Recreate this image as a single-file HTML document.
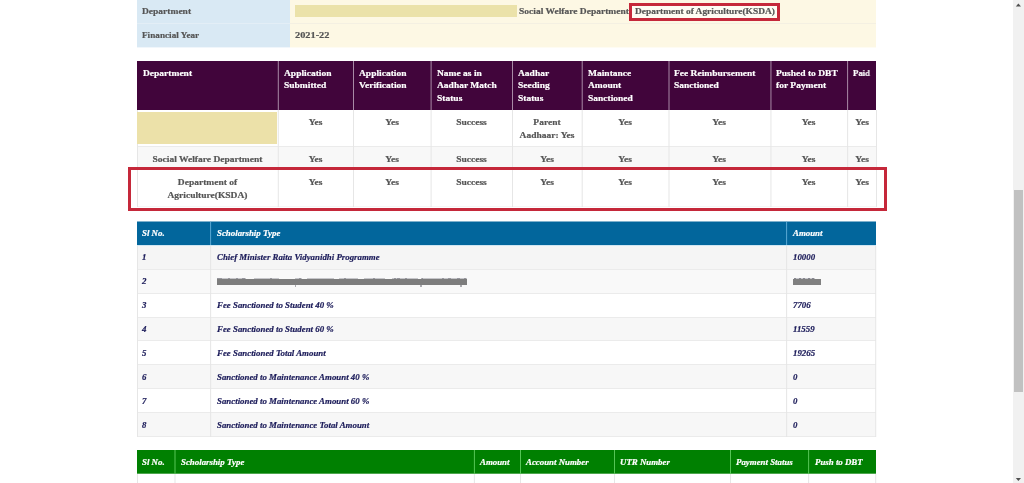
<!DOCTYPE html>
<html><head><meta charset="utf-8">
<style>
html,body{margin:0;padding:0;}
body{width:1024px;height:483px;overflow:hidden;background:#fff;position:relative;font-family:"Liberation Serif",serif;}
.a{position:absolute;box-sizing:border-box;}
.t{position:absolute;white-space:nowrap;font-weight:bold;font-size:8.9px;line-height:12.4px;color:#555;transform:scaleX(1.07);transform-origin:0 0;will-change:transform;-webkit-text-stroke:0.2px;}
.h{color:#fff;}
.c{text-align:center;transform-origin:50% 0;}
.b{line-height:13px;}
.i{font-style:italic;font-size:8.86px;color:#1c1c5a;transform:scaleX(1.0);}
.ih{font-style:italic;font-size:8.86px;color:#fff;transform:scaleX(1.0);}
</style></head><body>
<div class="a" style="left:137px;top:0px;width:153px;height:47px;background:#d9e9f4;"></div>
<div class="a" style="left:137px;top:47px;width:153px;height:1px;background:#d9e9f4;opacity:.4;"></div>
<div class="a" style="left:290px;top:0px;width:586px;height:47px;background:#fdf8e4;"></div>
<div class="a" style="left:290px;top:47px;width:586px;height:1px;background:#fdf8e4;opacity:.45;"></div>
<div class="a" style="left:137px;top:23px;width:153px;height:1px;background:#e3eef6;"></div>
<div class="a" style="left:290px;top:23px;width:586px;height:1px;background:#f4f0e2;"></div>
<div class="a" style="left:295px;top:5px;width:222px;height:12px;background:#ebe2a9;"></div>
<div class="a" style="left:629px;top:3px;width:151px;height:18px;border:3px solid #c5283a;background:rgba(255,255,255,.55);"></div>
<div class="t" style="left:142.0px;top:5.0px;">Department</div>
<div class="t" style="left:142.0px;top:28.7px;transform:scaleX(1.037);">Financial Year</div>
<div class="t" style="left:295.3px;top:28.7px;transform:scaleX(1.165);">2021-22</div>
<div class="t" style="left:518.5px;top:5.0px;">Social Welfare Department</div>
<div class="t" style="left:635px;top:5.0px;transform:scaleX(1.06);">Department of Agriculture(KSDA)</div>
<div class="a" style="left:137px;top:61px;width:739px;height:49px;background:#41053b;"></div>
<div class="a" style="left:277px;top:61px;width:1px;height:49px;background:#a88aa6;opacity:0.20;"></div>
<div class="a" style="left:278px;top:61px;width:1px;height:49px;background:#a88aa6;opacity:0.80;"></div>
<div class="a" style="left:353px;top:61px;width:1px;height:49px;background:#a88aa6;opacity:1.00;"></div>
<div class="a" style="left:430px;top:61px;width:1px;height:49px;background:#a88aa6;opacity:0.40;"></div>
<div class="a" style="left:431px;top:61px;width:1px;height:49px;background:#a88aa6;opacity:0.60;"></div>
<div class="a" style="left:512px;top:61px;width:1px;height:49px;background:#a88aa6;opacity:1.00;"></div>
<div class="a" style="left:581px;top:61px;width:1px;height:49px;background:#a88aa6;opacity:0.30;"></div>
<div class="a" style="left:582px;top:61px;width:1px;height:49px;background:#a88aa6;opacity:0.70;"></div>
<div class="a" style="left:668px;top:61px;width:1px;height:49px;background:#a88aa6;opacity:0.50;"></div>
<div class="a" style="left:669px;top:61px;width:1px;height:49px;background:#a88aa6;opacity:0.50;"></div>
<div class="a" style="left:770px;top:61px;width:1px;height:49px;background:#a88aa6;opacity:0.55;"></div>
<div class="a" style="left:771px;top:61px;width:1px;height:49px;background:#a88aa6;opacity:0.45;"></div>
<div class="a" style="left:847px;top:61px;width:1px;height:49px;background:#a88aa6;opacity:0.90;"></div>
<div class="a" style="left:848px;top:61px;width:1px;height:49px;background:#a88aa6;opacity:0.10;"></div>
<div class="t h" style="left:142.7px;top:67.1px;">Department</div>
<div class="t h" style="left:283.7px;top:67.1px;">Application<br>Submitted</div>
<div class="t h" style="left:358.7px;top:67.1px;">Application<br>Verification</div>
<div class="t h" style="left:436.7px;top:67.1px;">Name as in<br>Aadhar Match<br>Status</div>
<div class="t h" style="left:517.7px;top:67.1px;">Aadhar<br>Seeding<br>Status</div>
<div class="t h" style="left:587.7px;top:67.1px;">Maintance<br>Amount<br>Sanctioned</div>
<div class="t h" style="left:673.7px;top:67.1px;">Fee Reimbursement<br>Sanctioned</div>
<div class="t h" style="left:775.7px;top:67.1px;">Pushed to DBT<br>for Payment</div>
<div class="t h" style="left:852.7px;top:67.1px;transform:scaleX(0.98);">Paid</div>
<div class="a" style="left:137px;top:110px;width:740px;height:37px;background:#fff;border-bottom:1px solid #ebebeb;"></div>
<div class="a" style="left:137px;top:147px;width:740px;height:22px;background:#f8f8f8;border-bottom:1px solid #ebebeb;"></div>
<div class="a" style="left:137px;top:169px;width:740px;height:38px;background:#fff;border-bottom:1px solid #f6f6f6;"></div>
<div class="a" style="left:137px;top:110px;width:1px;height:97px;background:#e6e6e6;opacity:1.00;"></div>
<div class="a" style="left:277px;top:110px;width:1px;height:97px;background:#e6e6e6;opacity:0.20;"></div>
<div class="a" style="left:278px;top:110px;width:1px;height:97px;background:#e6e6e6;opacity:0.80;"></div>
<div class="a" style="left:353px;top:110px;width:1px;height:97px;background:#e6e6e6;opacity:1.00;"></div>
<div class="a" style="left:430px;top:110px;width:1px;height:97px;background:#e6e6e6;opacity:0.40;"></div>
<div class="a" style="left:431px;top:110px;width:1px;height:97px;background:#e6e6e6;opacity:0.60;"></div>
<div class="a" style="left:512px;top:110px;width:1px;height:97px;background:#e6e6e6;opacity:1.00;"></div>
<div class="a" style="left:581px;top:110px;width:1px;height:97px;background:#e6e6e6;opacity:0.30;"></div>
<div class="a" style="left:582px;top:110px;width:1px;height:97px;background:#e6e6e6;opacity:0.70;"></div>
<div class="a" style="left:668px;top:110px;width:1px;height:97px;background:#e6e6e6;opacity:0.50;"></div>
<div class="a" style="left:669px;top:110px;width:1px;height:97px;background:#e6e6e6;opacity:0.50;"></div>
<div class="a" style="left:770px;top:110px;width:1px;height:97px;background:#e6e6e6;opacity:0.55;"></div>
<div class="a" style="left:771px;top:110px;width:1px;height:97px;background:#e6e6e6;opacity:0.45;"></div>
<div class="a" style="left:847px;top:110px;width:1px;height:97px;background:#e6e6e6;opacity:0.90;"></div>
<div class="a" style="left:848px;top:110px;width:1px;height:97px;background:#e6e6e6;opacity:0.10;"></div>
<div class="a" style="left:876px;top:110px;width:1px;height:97px;background:#e6e6e6;opacity:1.00;"></div>
<div class="a" style="left:137px;top:112px;width:140px;height:32px;background:#ece1a9;"></div>
<div class="t c b" style="left:278px;top:115.7px;width:75px;">Yes</div>
<div class="t c b" style="left:353px;top:115.7px;width:78px;">Yes</div>
<div class="t c b" style="left:431px;top:115.7px;width:81px;">Success</div>
<div class="t c b" style="left:512px;top:115.7px;width:70px;">Parent<br>Aadhaar: Yes</div>
<div class="t c b" style="left:582px;top:115.7px;width:86px;">Yes</div>
<div class="t c b" style="left:668px;top:115.7px;width:102px;">Yes</div>
<div class="t c b" style="left:770px;top:115.7px;width:77px;">Yes</div>
<div class="t c b" style="left:847px;top:115.7px;width:30px;">Yes</div>
<div class="t c b" style="left:137px;top:152.7px;width:141px;">Social Welfare Department</div>
<div class="t c b" style="left:278px;top:152.7px;width:75px;">Yes</div>
<div class="t c b" style="left:353px;top:152.7px;width:78px;">Yes</div>
<div class="t c b" style="left:431px;top:152.7px;width:81px;">Success</div>
<div class="t c b" style="left:512px;top:152.7px;width:70px;">Yes</div>
<div class="t c b" style="left:582px;top:152.7px;width:86px;">Yes</div>
<div class="t c b" style="left:668px;top:152.7px;width:102px;">Yes</div>
<div class="t c b" style="left:770px;top:152.7px;width:77px;">Yes</div>
<div class="t c b" style="left:847px;top:152.7px;width:30px;">Yes</div>
<div class="t c b" style="left:137px;top:176.1px;width:141px;">Department of<br>Agriculture(KSDA)</div>
<div class="t c b" style="left:278px;top:176.1px;width:75px;">Yes</div>
<div class="t c b" style="left:353px;top:176.1px;width:78px;">Yes</div>
<div class="t c b" style="left:431px;top:176.1px;width:81px;">Success</div>
<div class="t c b" style="left:512px;top:176.1px;width:70px;">Yes</div>
<div class="t c b" style="left:582px;top:176.1px;width:86px;">Yes</div>
<div class="t c b" style="left:668px;top:176.1px;width:102px;">Yes</div>
<div class="t c b" style="left:770px;top:176.1px;width:77px;">Yes</div>
<div class="t c b" style="left:847px;top:176.1px;width:30px;">Yes</div>
<div class="a" style="left:128px;top:167px;width:759px;height:44px;border:3px solid #c5283a;"></div>
<div class="a" style="left:137px;top:221px;width:739px;height:1px;background:#7fb1cd;"></div>
<div class="a" style="left:137px;top:222px;width:739px;height:23px;background:#02669c;"></div>
<div class="a" style="left:210px;top:222px;width:1px;height:23px;background:#5aa8d4;opacity:0.90;"></div>
<div class="a" style="left:211px;top:222px;width:1px;height:23px;background:#5aa8d4;opacity:0.10;"></div>
<div class="a" style="left:786px;top:222px;width:1px;height:23px;background:#5aa8d4;opacity:0.90;"></div>
<div class="a" style="left:787px;top:222px;width:1px;height:23px;background:#5aa8d4;opacity:0.10;"></div>
<div class="a" style="left:137px;top:245px;width:739px;height:1px;background:#cfe6f3;"></div>
<div class="t ih" style="left:142.1px;top:227.1px;">Sl No.</div>
<div class="t ih" style="left:216.7px;top:227.1px;">Scholarship Type</div>
<div class="t ih" style="left:792.5px;top:227.1px;">Amount</div>
<div class="a" style="left:137px;top:246px;width:739px;height:24px;background:#f5f5f5;border-bottom:1px solid #ebebeb;"></div>
<div class="t i" style="left:142.1px;top:251.2px;">1</div>
<div class="t i" style="left:216.7px;top:251.2px;">Chief Minister Raita Vidyanidhi Programme</div>
<div class="t i" style="left:792.5px;top:251.2px;">10000</div>
<div class="a" style="left:137px;top:270px;width:739px;height:24px;background:#f9f9f9;border-bottom:1px solid #ebebeb;"></div>
<div class="t i" style="left:142.1px;top:275.2px;">2</div>
<div class="a" style="left:137px;top:294px;width:739px;height:24px;background:#fff;border-bottom:1px solid #ebebeb;"></div>
<div class="t i" style="left:142.1px;top:299.2px;">3</div>
<div class="t i" style="left:216.7px;top:299.2px;">Fee Sanctioned to Student 40 %</div>
<div class="t i" style="left:792.5px;top:299.2px;">7706</div>
<div class="a" style="left:137px;top:318px;width:739px;height:23px;background:#f7f7f7;border-bottom:1px solid #ebebeb;"></div>
<div class="t i" style="left:142.1px;top:323.2px;">4</div>
<div class="t i" style="left:216.7px;top:323.2px;">Fee Sanctioned to Student 60 %</div>
<div class="t i" style="left:792.5px;top:323.2px;">11559</div>
<div class="a" style="left:137px;top:341px;width:739px;height:24px;background:#fff;border-bottom:1px solid #ebebeb;"></div>
<div class="t i" style="left:142.1px;top:347.2px;">5</div>
<div class="t i" style="left:216.7px;top:347.2px;">Fee Sanctioned Total Amount</div>
<div class="t i" style="left:792.5px;top:347.2px;">19265</div>
<div class="a" style="left:137px;top:365px;width:739px;height:24px;background:#f7f7f7;border-bottom:1px solid #ebebeb;"></div>
<div class="t i" style="left:142.1px;top:371.2px;">6</div>
<div class="t i" style="left:216.7px;top:371.2px;">Sanctioned to Maintenance Amount 40 %</div>
<div class="t i" style="left:792.5px;top:371.2px;">0</div>
<div class="a" style="left:137px;top:389px;width:739px;height:24px;background:#fff;border-bottom:1px solid #ebebeb;"></div>
<div class="t i" style="left:142.1px;top:395.2px;">7</div>
<div class="t i" style="left:216.7px;top:395.2px;">Sanctioned to Maintenance Amount 60 %</div>
<div class="t i" style="left:792.5px;top:395.2px;">0</div>
<div class="a" style="left:137px;top:413px;width:739px;height:24px;background:#f7f7f7;border-bottom:1px solid #ebebeb;"></div>
<div class="t i" style="left:142.1px;top:419.2px;">8</div>
<div class="t i" style="left:216.7px;top:419.2px;">Sanctioned to Maintenance Total Amount</div>
<div class="t i" style="left:792.5px;top:419.2px;">0</div>
<div class="a" style="left:137px;top:246px;width:1px;height:191px;background:#e6e6e6;opacity:1.00;"></div>
<div class="a" style="left:210px;top:246px;width:1px;height:191px;background:#e6e6e6;opacity:0.90;"></div>
<div class="a" style="left:211px;top:246px;width:1px;height:191px;background:#e6e6e6;opacity:0.10;"></div>
<div class="a" style="left:786px;top:246px;width:1px;height:191px;background:#e6e6e6;opacity:0.90;"></div>
<div class="a" style="left:787px;top:246px;width:1px;height:191px;background:#e6e6e6;opacity:0.10;"></div>
<div class="a" style="left:875px;top:246px;width:1px;height:191px;background:#e6e6e6;opacity:0.80;"></div>
<div class="a" style="left:876px;top:246px;width:1px;height:191px;background:#e6e6e6;opacity:0.20;"></div>
<div class="a" style="left:216.6px;top:279px;width:250.7px;height:6px;background:#7d7d7d;"></div>
<div class="a" style="left:217.3px;top:277.7px;width:2.4px;height:1.5px;background:#4a4a55;opacity:.4;"></div>
<div class="a" style="left:220.0px;top:277.7px;width:2.4px;height:1.5px;background:#4a4a55;opacity:.4;"></div>
<div class="a" style="left:227.9px;top:277.7px;width:2.4px;height:1.5px;background:#4a4a55;opacity:.4;"></div>
<div class="a" style="left:235.8px;top:277.7px;width:2.4px;height:1.5px;background:#4a4a55;opacity:.4;"></div>
<div class="a" style="left:242.4px;top:277.7px;width:2.4px;height:1.5px;background:#4a4a55;opacity:.4;"></div>
<div class="a" style="left:270.1px;top:277.7px;width:2.4px;height:1.5px;background:#4a4a55;opacity:.4;"></div>
<div class="a" style="left:298.6px;top:277.7px;width:2.4px;height:1.5px;background:#4a4a55;opacity:.4;"></div>
<div class="a" style="left:344.0px;top:277.7px;width:2.4px;height:1.5px;background:#4a4a55;opacity:.4;"></div>
<div class="a" style="left:373.0px;top:277.7px;width:2.4px;height:1.5px;background:#4a4a55;opacity:.4;"></div>
<div class="a" style="left:394.1px;top:277.7px;width:2.4px;height:1.5px;background:#4a4a55;opacity:.4;"></div>
<div class="a" style="left:397.3px;top:277.7px;width:2.4px;height:1.5px;background:#4a4a55;opacity:.4;"></div>
<div class="a" style="left:404.7px;top:277.7px;width:2.4px;height:1.5px;background:#4a4a55;opacity:.4;"></div>
<div class="a" style="left:420.5px;top:277.7px;width:2.4px;height:1.5px;background:#4a4a55;opacity:.4;"></div>
<div class="a" style="left:441.6px;top:277.7px;width:2.4px;height:1.5px;background:#4a4a55;opacity:.4;"></div>
<div class="a" style="left:448.2px;top:277.7px;width:2.4px;height:1.5px;background:#4a4a55;opacity:.4;"></div>
<div class="a" style="left:457.4px;top:277.7px;width:2.4px;height:1.5px;background:#4a4a55;opacity:.4;"></div>
<div class="a" style="left:464.0px;top:277.7px;width:2.4px;height:1.5px;background:#4a4a55;opacity:.4;"></div>
<div class="a" style="left:294.6px;top:285px;width:1.8px;height:1.6px;background:#4a4a55;opacity:.45;"></div>
<div class="a" style="left:420.2px;top:285px;width:1.8px;height:1.6px;background:#4a4a55;opacity:.45;"></div>
<div class="a" style="left:460.3px;top:285px;width:1.8px;height:1.6px;background:#4a4a55;opacity:.45;"></div>
<div class="a" style="left:216.6px;top:278px;width:29.0px;height:1px;background:#5a5a66;opacity:.32;"></div>
<div class="a" style="left:253.5px;top:278px;width:25.6px;height:1px;background:#5a5a66;opacity:.32;"></div>
<div class="a" style="left:295.0px;top:278px;width:7.4px;height:1px;background:#5a5a66;opacity:.32;"></div>
<div class="a" style="left:307.1px;top:278px;width:26.9px;height:1px;background:#5a5a66;opacity:.32;"></div>
<div class="a" style="left:339.3px;top:278px;width:19.0px;height:1px;background:#5a5a66;opacity:.32;"></div>
<div class="a" style="left:363.6px;top:278px;width:21.1px;height:1px;background:#5a5a66;opacity:.32;"></div>
<div class="a" style="left:392.1px;top:278px;width:26.4px;height:1px;background:#5a5a66;opacity:.32;"></div>
<div class="a" style="left:421.6px;top:278px;width:45.6px;height:1px;background:#5a5a66;opacity:.32;"></div>
<div class="a" style="left:793px;top:279px;width:28.3px;height:6px;background:#808080;"></div>
<div class="a" style="left:793.5px;top:278px;width:21px;height:1px;background:#5a5a66;opacity:.3;"></div>
<div class="a" style="left:794px;top:277.8px;width:2.2px;height:1.4px;background:#3a3a4a;opacity:.45;"></div>
<div class="a" style="left:798.5px;top:277.8px;width:2.2px;height:1.4px;background:#3a3a4a;opacity:.45;"></div>
<div class="a" style="left:803px;top:277.8px;width:2.2px;height:1.4px;background:#3a3a4a;opacity:.45;"></div>
<div class="a" style="left:807.5px;top:277.8px;width:2.2px;height:1.4px;background:#3a3a4a;opacity:.45;"></div>
<div class="a" style="left:812px;top:277.8px;width:2.2px;height:1.4px;background:#3a3a4a;opacity:.45;"></div>
<div class="a" style="left:137px;top:450px;width:739px;height:23px;background:#008001;"></div>
<div class="a" style="left:137px;top:473px;width:739px;height:1px;background:#4da64d;"></div>
<div class="a" style="left:174px;top:450px;width:1px;height:24px;background:#55c555;opacity:0.50;"></div>
<div class="a" style="left:175px;top:450px;width:1px;height:24px;background:#55c555;opacity:0.50;"></div>
<div class="a" style="left:473px;top:450px;width:1px;height:24px;background:#55c555;opacity:0.10;"></div>
<div class="a" style="left:474px;top:450px;width:1px;height:24px;background:#55c555;opacity:0.90;"></div>
<div class="a" style="left:520px;top:450px;width:1px;height:24px;background:#55c555;opacity:1.00;"></div>
<div class="a" style="left:614px;top:450px;width:1px;height:24px;background:#55c555;opacity:1.00;"></div>
<div class="a" style="left:730px;top:450px;width:1px;height:24px;background:#55c555;opacity:1.00;"></div>
<div class="a" style="left:808px;top:450px;width:1px;height:24px;background:#55c555;opacity:0.90;"></div>
<div class="a" style="left:809px;top:450px;width:1px;height:24px;background:#55c555;opacity:0.10;"></div>
<div class="t ih" style="left:142.2px;top:455.6px;">Sl No.</div>
<div class="t ih" style="left:180.8px;top:455.6px;">Scholarship Type</div>
<div class="t ih" style="left:479.8px;top:455.6px;">Amount</div>
<div class="t ih" style="left:525.8px;top:455.6px;">Account Number</div>
<div class="t ih" style="left:620.3px;top:455.6px;">UTR Number</div>
<div class="t ih" style="left:736.3px;top:455.6px;">Payment Status</div>
<div class="t ih" style="left:814.5px;top:455.6px;">Push to DBT</div>
<div class="a" style="left:137px;top:474px;width:1px;height:9px;background:#e6e6e6;opacity:1.00;"></div>
<div class="a" style="left:174px;top:474px;width:1px;height:9px;background:#e6e6e6;opacity:0.50;"></div>
<div class="a" style="left:175px;top:474px;width:1px;height:9px;background:#e6e6e6;opacity:0.50;"></div>
<div class="a" style="left:473px;top:474px;width:1px;height:9px;background:#e6e6e6;opacity:0.10;"></div>
<div class="a" style="left:474px;top:474px;width:1px;height:9px;background:#e6e6e6;opacity:0.90;"></div>
<div class="a" style="left:520px;top:474px;width:1px;height:9px;background:#e6e6e6;opacity:1.00;"></div>
<div class="a" style="left:614px;top:474px;width:1px;height:9px;background:#e6e6e6;opacity:1.00;"></div>
<div class="a" style="left:730px;top:474px;width:1px;height:9px;background:#e6e6e6;opacity:1.00;"></div>
<div class="a" style="left:808px;top:474px;width:1px;height:9px;background:#e6e6e6;opacity:0.90;"></div>
<div class="a" style="left:809px;top:474px;width:1px;height:9px;background:#e6e6e6;opacity:0.10;"></div>
<div class="a" style="left:875px;top:474px;width:1px;height:9px;background:#e6e6e6;opacity:0.80;"></div>
<div class="a" style="left:876px;top:474px;width:1px;height:9px;background:#e6e6e6;opacity:0.20;"></div>
<div class="a" style="left:1013px;top:0px;width:11px;height:483px;background:#f1f1f1;"></div>
<div class="a" style="left:1014px;top:190px;width:9px;height:202px;background:#c1c1c1;"></div>
<svg class="a" style="left:1013px;top:0" width="11" height="483"><path d="M2.8 6.6 L5.4 3.6 L8 6.6Z" fill="#505050"/><path d="M2.8 477.9 L5.4 481 L8 477.9Z" fill="#505050"/></svg>
</body></html>
